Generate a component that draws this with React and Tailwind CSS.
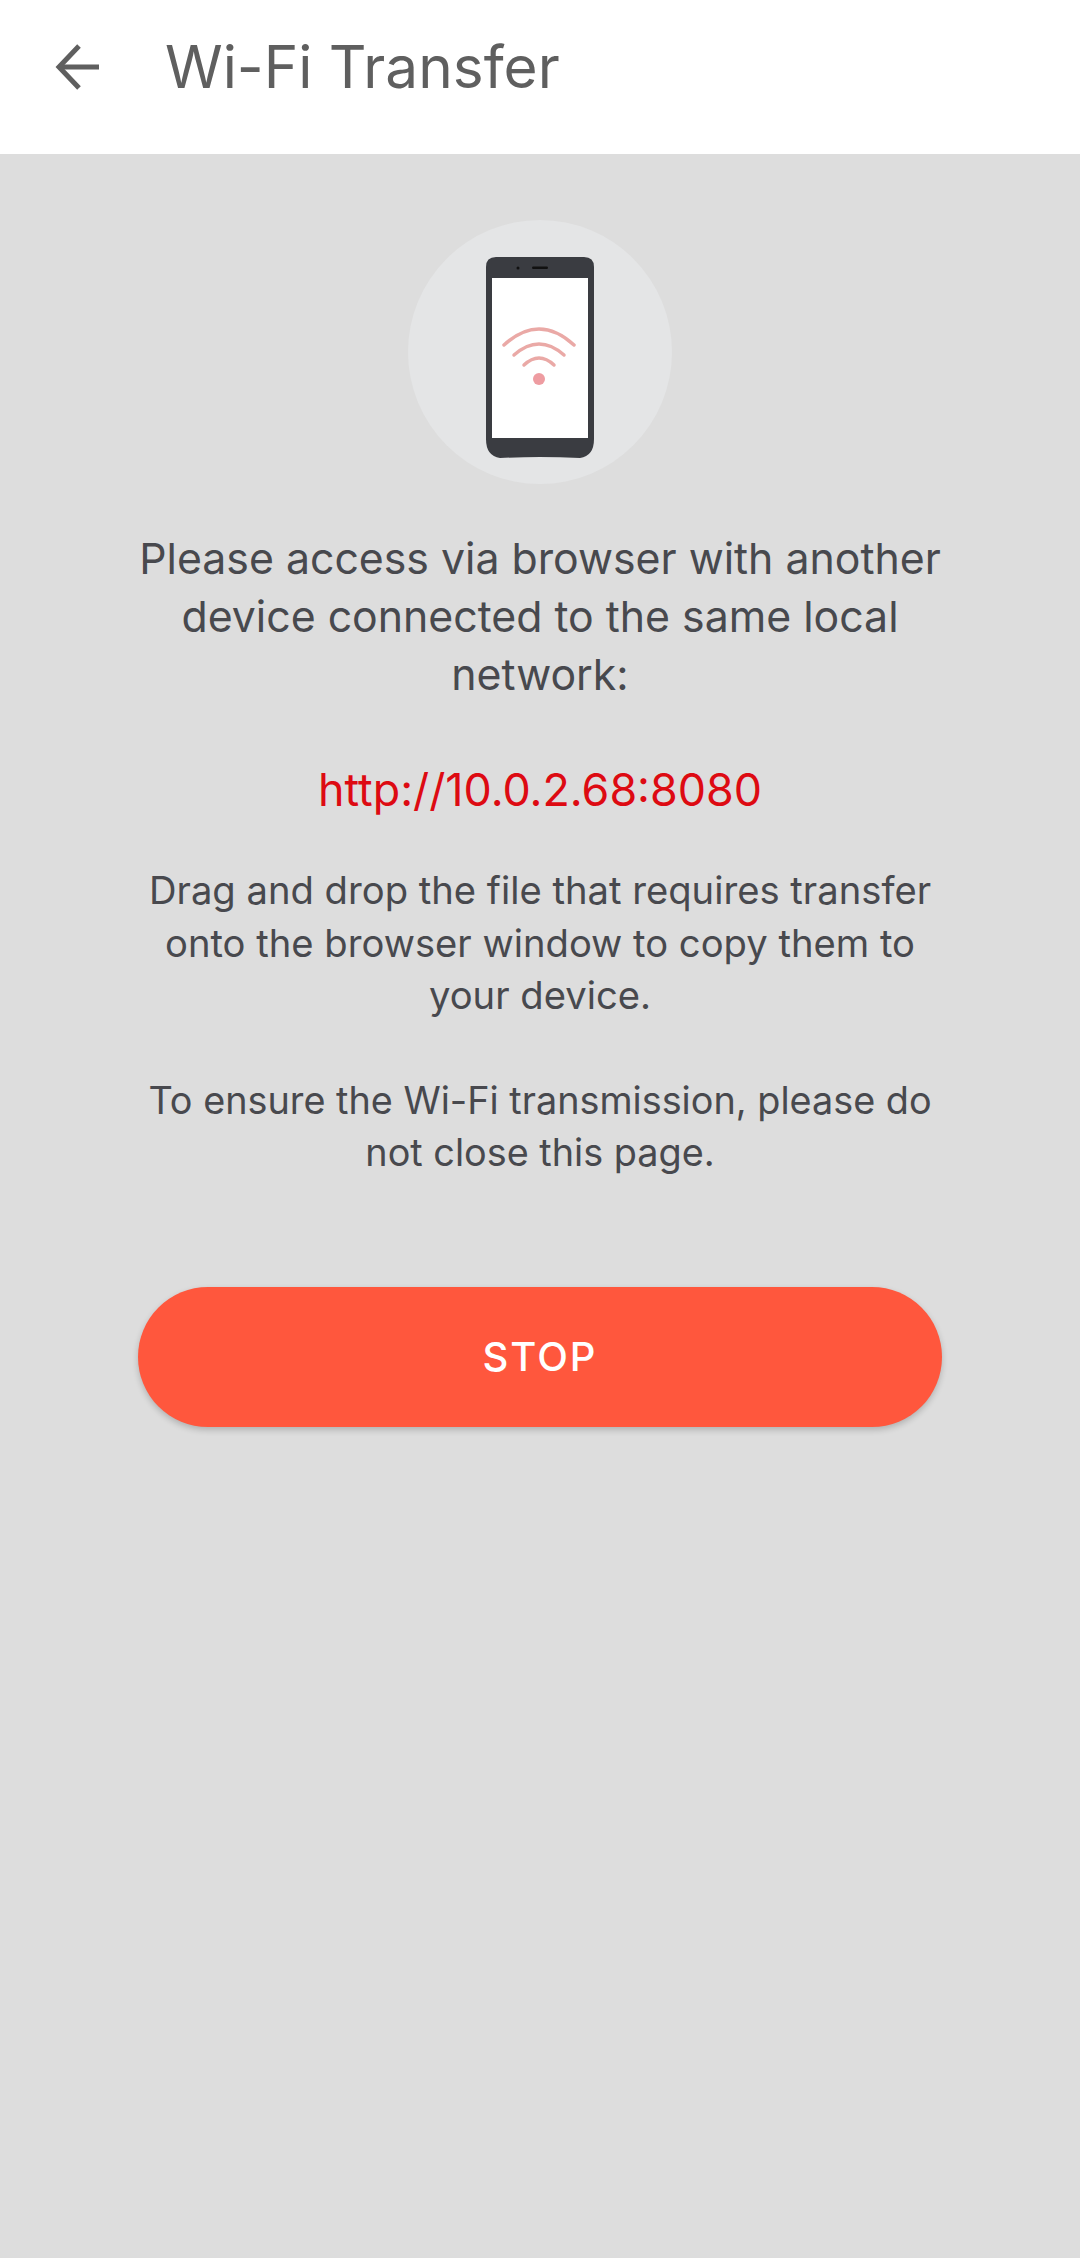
const PhoneIcon = () => {
  return (
    <svg viewBox="0 0 108 202" className="mt-[12px] h-[202px] w-[108px]">
      <path
        d="M10 0H98Q108 0 108 10V182Q108 199 94 201Q54 199 14 201Q0 199 0 182V10Q0 0 10 0Z"
        fill="#3a3c41"
      />
      <rect x="6" y="21" width="96" height="160" fill="#ffffff" />
      <circle cx="32" cy="11" r="1.5" fill="#111" />
      <rect x="46" y="9.5" width="16" height="2.5" rx="1.2" fill="#111" />
      <g fill="none" stroke="#eaa9a6" strokeWidth="3.5" strokeLinecap="round">
        <path d="M18 88Q53 56 88 88" />
        <path d="M28 98Q53 76 78 98" />
        <path d="M38 108Q53 94 68 108" />
      </g>
      <circle cx="53" cy="122" r="6" fill="#ee9ca1" />
    </svg>
  );
};

const App = () => {
  return (
    <div className="flex min-h-[2258px] flex-col bg-[#dddddd] font-['Inter',sans-serif]">
      <header className="flex h-[154px] items-center bg-white pb-[20px]">
        <svg
          viewBox="0 0 44 46"
          className="ml-[55px] h-[46px] w-[44px]"
          fill="none"
          stroke="#5f5f5f"
          strokeWidth="5"
        >
          <path d="M44 23H4" />
          <path d="M24 2L4 23L24 44" />
        </svg>
        <h1 className="ml-[66px] text-[58.5px] leading-none font-normal text-[#5f5f5f]">
          Wi-Fi Transfer
        </h1>
      </header>

      <main className="flex flex-col items-center px-[138px] text-center">
        <div className="mt-[66px] flex h-[264px] w-[264px] items-center justify-center rounded-full bg-[#e4e5e6]">
          <PhoneIcon />
        </div>
        <p className="mt-[46px] w-[804px] text-[42.8px] leading-[58px] text-[#48494e]">
          Please access via browser with another device connected to the same
          local network:
        </p>
        <p className="mt-[57px] text-[44.8px] leading-[58px] text-[#dd0a12]">
          http://10.0.2.68:8080
        </p>
        <p className="mt-[45px] w-[804px] text-[38.2px] leading-[52.5px] text-[#48494e]">
          Drag and drop the file that requires transfer onto the browser window
          to copy them to your device.
        </p>
        <p className="mt-[52px] w-[804px] text-[37.8px] leading-[52.5px] text-[#48494e]">
          To ensure the Wi-Fi transmission, please do not close this page.
        </p>
        <button className="mt-[108px] h-[140px] w-[804px] shrink-0 rounded-full bg-[#ff573d] text-[40px] font-medium tracking-[2px] text-white shadow-[0_3px_6px_rgba(0,0,0,0.2)]">
          STOP
        </button>
      </main>
    </div>
  );
};

export default App;
